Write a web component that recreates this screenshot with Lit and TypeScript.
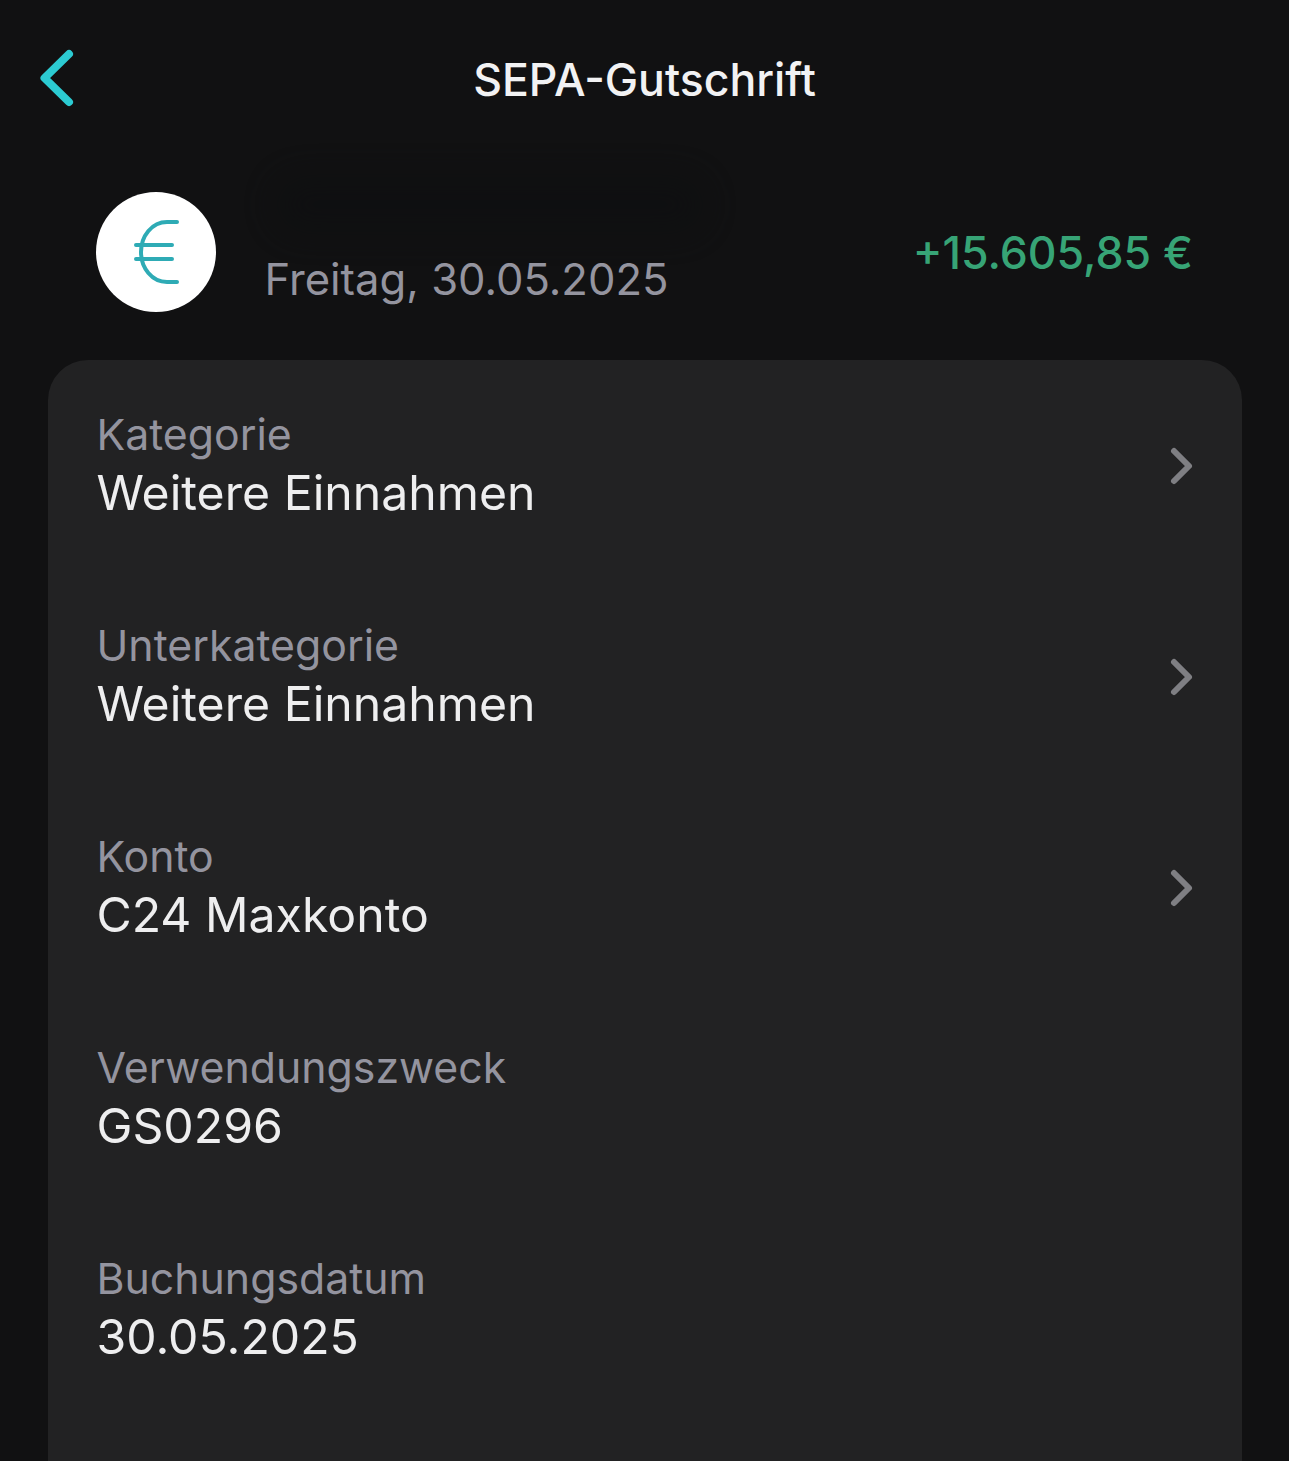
import { LitElement, html, css, svg } from "lit";
import { customElement } from "lit/decorators.js";

const rows = [
  { label: "Kategorie", value: "Weitere Einnahmen", link: true },
  { label: "Unterkategorie", value: "Weitere Einnahmen", link: true },
  { label: "Konto", value: "C24 Maxkonto", link: true },
  { label: "Verwendungszweck", value: "GS0296", link: false },
  { label: "Buchungsdatum", value: "30.05.2025", link: false },
];

const chevron = svg`<path d="M6 7 L21 22 L6 37" fill="none" stroke="currentColor" stroke-width="6" stroke-linecap="round" stroke-linejoin="round"/>`;

@customElement("app-root")
export class AppRoot extends LitElement {
  static styles = css`
    :host {
      display: flex;
      flex-direction: column;
      height: 1461px;
      overflow: hidden;
      background: #111112;
      font-family: Inter, "Liberation Sans", sans-serif;
    }
    .nav {
      display: flex;
      align-items: center;
      justify-content: center;
      position: relative;
      flex: none;
      height: 160px;
    }
    .back {
      position: absolute;
      left: 39px;
      top: 49px;
      width: 35px;
      height: 58px;
      color: #2ccbd2;
    }
    .title {
      font-size: 44.6px;
      font-weight: 450;
      color: #f2f2f3;
    }
    .summary {
      display: flex;
      align-items: center;
      flex: none;
      position: relative;
      height: 200px;
      padding: 0 96px;
      margin-top: -8px;
    }
    /* the redacted name above the date, a barely visible smudge */
    .smudge {
      position: absolute;
      left: 275px;
      top: 25px;
      width: 430px;
      height: 55px;
      border-radius: 28px;
      background: #0c0e10;
      filter: blur(16px);
      opacity: 0.45;
    }
    .badge {
      width: 120px;
      height: 120px;
      border-radius: 50%;
      background: #fff;
      display: flex;
      align-items: center;
      justify-content: center;
      flex: none;
    }
    .badge svg {
      width: 48px;
      height: 66px;
      color: #2eabb5;
    }
    .date {
      position: relative;
      margin-left: 48.5px;
      margin-top: 54px;
      font-size: 43.6px;
      color: #94949f;
    }
    .amount {
      margin-left: auto;
      margin-top: 2px;
      font-size: 44.6px;
      font-weight: 450;
      color: #37a476;
    }
    .card {
      flex: 1;
      margin: 8px 47px 0 48px;
      background: #222223;
      border-radius: 40px 40px 0 0;
      padding: 30px 48px 0 48.5px;
    }
    .row {
      display: flex;
      align-items: center;
      justify-content: space-between;
      height: 211px;
      padding-bottom: 59px;
      box-sizing: border-box;
    }
    .text {
      margin-top: 3px;
    }
    .label {
      font-size: 42.8px;
      line-height: 50px;
      color: #94949f;
    }
    .value {
      font-size: 48.2px;
      line-height: 66px;
      color: #eeeeef;
    }
    .chev {
      width: 26px;
      height: 44px;
      color: #7f7f83;
    }
  `;

  render() {
    return html`
      <div class="nav">
        <svg class="back" viewBox="0 0 35 58">
          <path d="M30 5 L5.5 29 L30 53" fill="none" stroke="currentColor" stroke-width="8" stroke-linecap="round" stroke-linejoin="round" />
        </svg>
        <div class="title">SEPA-Gutschrift</div>
      </div>
      <div class="summary">
        <div class="smudge"></div>
        <div class="badge">
          <svg viewBox="0 0 48 66">
            <path d="M45 3 H35 C20 3 9 17 9 33 C9 49 20 63 35 63 H45" fill="none" stroke="currentColor" stroke-width="4" stroke-linecap="round" />
            <path d="M4 26 H40 M4 40 H40" fill="none" stroke="currentColor" stroke-width="4" stroke-linecap="round" />
          </svg>
        </div>
        <div class="date">Freitag, 30.05.2025</div>
        <div class="amount">+15.605,85 €</div>
      </div>
      <div class="card">
        ${rows.map(
          (r) => html`
            <div class="row">
              <div class="text">
                <div class="label">${r.label}</div>
                <div class="value">${r.value}</div>
              </div>
              ${r.link ? html`<svg class="chev" viewBox="0 0 26 44">${chevron}</svg>` : ""}
            </div>
          `
        )}
      </div>
    `;
  }
}
